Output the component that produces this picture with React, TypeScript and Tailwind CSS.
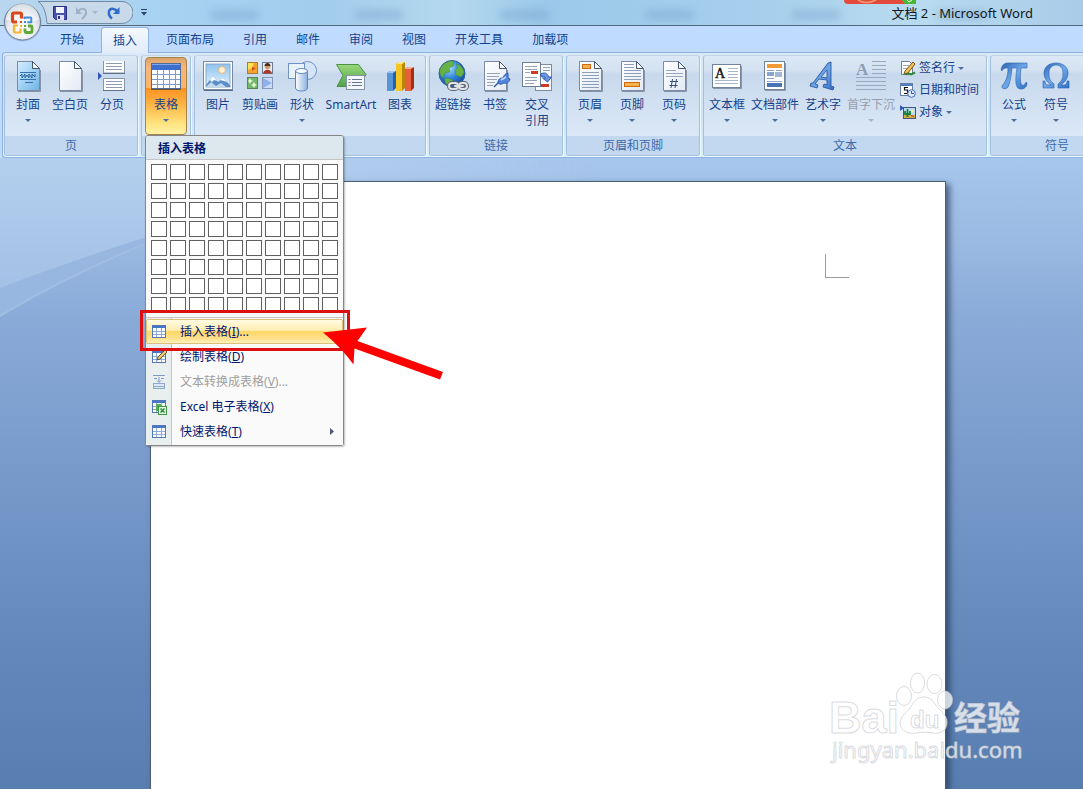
import React, { useState } from 'react';

const FONT = "font-['Noto_Sans','Noto_Sans_CJK_SC',sans-serif]";

const TABS = ['开始', '插入', '页面布局', '引用', '邮件', '审阅', '视图', '开发工具', '加载项'];

/* ---------- icons ---------- */

function Svg({ children, size = 32 }: { children: React.ReactNode; size?: number }) {
  return (
    <svg width={size} height={size} viewBox={`0 0 ${size} ${size}`} className="block shrink-0" aria-hidden="true">
      {children}
    </svg>
  );
}

function Gradients() {
  return (
    <svg width="0" height="0" className="absolute" aria-hidden="true">
      <defs>
        <linearGradient id="gBlue" x1="0" y1="0" x2="1" y2="1">
          <stop offset="0" stopColor="#d6efff" />
          <stop offset="1" stopColor="#6fb4e8" />
        </linearGradient>
        <linearGradient id="gPage" x1="0" y1="0" x2="1" y2="1">
          <stop offset="0" stopColor="#ffffff" />
          <stop offset="1" stopColor="#e3eaf5" />
        </linearGradient>
        <linearGradient id="gLetter" x1="0" y1="0" x2="1" y2="1">
          <stop offset="0" stopColor="#2c62b4" />
          <stop offset="0.5" stopColor="#6fa8e8" />
          <stop offset="1" stopColor="#2f6fc4" />
        </linearGradient>
        <linearGradient id="gGreen" x1="0" y1="0" x2="0" y2="1">
          <stop offset="0" stopColor="#9bd67c" />
          <stop offset="1" stopColor="#4fa548" />
        </linearGradient>
        <linearGradient id="gCyl" x1="0" y1="0" x2="1" y2="0">
          <stop offset="0" stopColor="#ffffff" />
          <stop offset="1" stopColor="#8bb0e0" />
        </linearGradient>
        <radialGradient id="gGlobe" cx="0.4" cy="0.3" r="0.75">
          <stop offset="0" stopColor="#a6dcff" />
          <stop offset="0.5" stopColor="#2f86dc" />
          <stop offset="1" stopColor="#123f97" />
        </radialGradient>
        <linearGradient id="gSky" x1="0" y1="0" x2="0" y2="1">
          <stop offset="0" stopColor="#8cc3f0" />
          <stop offset="1" stopColor="#e2f3fd" />
        </linearGradient>
      </defs>
    </svg>
  );
}

function Sheet({ fill = 'url(#gPage)' }: { fill?: string }) {
  return (
    <>
      <path d="M6 31.500h22.500V10" fill="none" stroke="#8794a8" strokeWidth="1" />
      <path d="M5.500 1.500h15l7 7v22h-22z" fill={fill} stroke="#7b8ba5" />
      <path d="M20.500 1.500v7h7z" fill="#f7fafd" stroke="#46566e" />
    </>
  );
}

const Cover = () => (
  <Svg>
    <Sheet fill="url(#gBlue)" />
    <path d="M8 12.500h16" stroke="#3572ab" />
    <path d="M8 16l2-2v4l3-4v4l2-3 2 3v-4l3 4v-4l3 3v-3" fill="none" stroke="#276099" />
    <path d="M8 19.500h16M13 22.500h8" stroke="#3572ab" />
  </Svg>
);
const Blank = () => <Svg><Sheet /></Svg>;
const Break = () => (
  <Svg>
    <path d="M7.500 1v12h21V1M7.500 30.500V18.500h21v12z" fill="#fff" stroke="#8795aa" />
    <path d="M7 13.500h22M7 30.500h22" stroke="#60718c" />
    <path d="M10 3.500h16M10 6.500h16M10 9.500h16M10 21.500h16M10 24.500h16M10 27.500h16" stroke="#8b9bb6" />
    <path d="M2 12l4 4-4 4z" fill="#2f58b4" />
  </Svg>
);
const TableIcon = () => (
  <Svg>
    <rect x="1.500" y="3.500" width="29" height="25" fill="#fff" stroke="#4d6c9c" />
    <rect x="2" y="4" width="28" height="6" fill="#3c6fcd" />
    <path d="M2 4.500h28" stroke="#7fa7ea" />
    <path d="M2 14.500h28M2 19.500h28M2 24.500h28M7.500 10v18M13.500 10v18M19.500 10v18M25.500 10v18" stroke="#7d9cc9" />
    <path d="M1 29.500h30" stroke="#705227" />
  </Svg>
);
const Picture = () => (
  <Svg>
    <rect x="1.500" y="1.500" width="29" height="28" fill="#fff" stroke="#7688a2" />
    <rect x="4" y="4" width="24" height="23" fill="url(#gSky)" stroke="#8ca6c4" />
    <circle cx="20" cy="10" r="3.500" fill="#fff3cf" stroke="#e6b27a" />
    <path d="M4 25l7-9 5 6 5-4 7 7v2H4z" fill="#5c8fc9" />
    <path d="M8 20l3-4 4 5-3-1-2 2zM18 20l3-2 4 4-3-1z" fill="#fff" />
    <path d="M4 27l5-5 5 4 5-3 5 4z" fill="#dcecf9" opacity=".8" />
    <path d="M2 30.500h29" stroke="#5c6f8a" />
  </Svg>
);
const Clip = () => (
  <Svg>
    <rect x="3.500" y="2.500" width="10" height="11" fill="#f2a52b" stroke="#a8793a" />
    <path d="M4 3h6l-2 5-4 2z" fill="#ffe24d" /><path d="M8 7l4 1-4 3z" fill="#d84d20" />
    <rect x="18.500" y="2.500" width="10" height="11" fill="#e7edf6" stroke="#6d7b90" />
    <circle cx="23.500" cy="6.500" r="2.800" fill="#d79a62" /><path d="M20.500 6c0-4 6-4 6 0z" fill="#4b2b1c" />
    <path d="M19 13.500c1-5 8-5 9 0z" fill="#ad3729" />
    <rect x="3.500" y="17.500" width="10" height="11" fill="#73b86d" stroke="#5a8458" />
    <path d="M6 18l1 2 2 1-2 1-1 2-1-2-1-1 1-1zM10 22l1 2 2 1-2 1-1 2-1-2-2-1 2-1z" fill="#e6f9d6" />
    <rect x="18.500" y="17.500" width="10" height="11" fill="#cbdcfa" stroke="#8498bd" />
    <path d="M19 18l9 5-9 5z" fill="#8fb0ea" />
  </Svg>
);
const Shapes = () => (
  <Svg>
    <circle cx="21.500" cy="10.500" r="9" fill="#d5e5f8" stroke="#6f93c4" />
    <rect x="2.500" y="3.500" width="16" height="15" fill="#e9f1fb" stroke="#6f93c4" />
    <path d="M9.500 11v17c0 4 12 4 12 0V11z" fill="url(#gCyl)" stroke="#5f85ba" />
    <ellipse cx="15.500" cy="11" rx="6" ry="2.500" fill="#f5faff" stroke="#5f85ba" />
  </Svg>
);
const SmartArt = () => (
  <Svg>
    <path d="M1.500 4.500h22l7.500 10-7 12h-22l6-11z" fill="url(#gGreen)" stroke="#4c9148" />
    <rect x="11.500" y="15.500" width="18" height="14" fill="#f4f7fb" stroke="#8492a6" />
    <path d="M17 19.500h10M17 22.500h10M17 25.500h10M13.500 19.500h2M13.500 22.500h2M13.500 25.500h2" stroke="#66768e" />
  </Svg>
);
const Chart = () => (
  <Svg>
    <path d="M3 13l3-2h6v17l-3 3H3z" fill="#2563a9" /><path d="M3 13h6v18H3z" fill="#5795d6" /><path d="M3 13l3-2h6l-3 2z" fill="#9bc7ee" />
    <path d="M12 4l3-2h6v26l-3 3h-6z" fill="#ba8608" /><path d="M12 4h6v27h-6z" fill="#f5c623" /><path d="M12 4l3-2h6l-3 2z" fill="#ffe982" />
    <path d="M21 9l3-2h6v21l-3 3h-6z" fill="#a52c13" /><path d="M21 9h6v22h-6z" fill="#e8603b" /><path d="M21 9l3-2h6l-3 2z" fill="#ffad8a" />
  </Svg>
);
const Globe = () => (
  <Svg>
    <circle cx="15" cy="13.500" r="13" fill="url(#gGlobe)" stroke="#2b5a9d" />
    <path d="M3 9c3-7 10-8 14-8l-1 5-4 2 1 4-5 1-2 5c-3-3-4-6-3-9zM19 4c5 1 8 5 8 9l-3 4-5-2-1-5 3-2zM8 18l6 1 3 3-4 4c-4-1-6-4-5-8z" fill="#65b247" stroke="#3e8934" strokeWidth=".5" />
    <g fill="none" strokeLinecap="round">
      <g stroke="#5c646e" strokeWidth="4"><rect x="12" y="23" width="9" height="6" rx="3" /><rect x="22" y="23" width="8" height="6" rx="3" /><path d="M18 26h8" /></g>
      <g stroke="#dfe4e8" strokeWidth="2"><rect x="12" y="23" width="9" height="6" rx="3" /><rect x="22" y="23" width="8" height="6" rx="3" /><path d="M18 26h8" /></g>
    </g>
  </Svg>
);
const Bookmark = () => (
  <Svg>
    <Sheet />
    <path d="M8 13.500h13M8 16.500h12M8 19.500h10M8 22.500h8M8 25.500h6" stroke="#95a2b7" />
    <path d="M15 27l5-5" stroke="#2d5aae" strokeWidth="1.500" />
    <path d="M19 23c0-4 2-5 5-5 1-3 3-5 5-5v5l2 1c-1 4-4 5-6 4-2 1-4 2-6 0z" fill="#5285db" stroke="#2d5aae" />
    <path d="M22 20l5-3" stroke="#c1dcff" strokeWidth="1.500" />
  </Svg>
);
const CrossRef = () => (
  <Svg>
    <rect x="14.500" y="4.500" width="16" height="26" fill="#f8fafd" stroke="#7d8ca2" />
    <rect x="1.500" y="2.500" width="18" height="24" fill="#fff" stroke="#6f7f98" />
    <path d="M4 6.500h12M4 9.500h12M4 12.500h5M4 17.500h12M4 20.500h12M4 23.500h9M22 7.500h7M22 10.500h7" stroke="#94a2b8" />
    <rect x="10" y="11" width="7" height="3" fill="#cf3a22" /><rect x="20" y="24" width="8" height="3" fill="#cf3a22" />
    <path d="M19.500 14c4-2 7-1 8 3h3l-4 5-5-4h3c-1-2-2-2-4-1z" fill="#6b98e4" stroke="#2d5bad" />
  </Svg>
);
const HeaderIcon = () => (
  <Svg><Sheet /><rect x="8.500" y="4.500" width="8" height="4" fill="#f7b14b" stroke="#cc6b15" />
    <path d="M8 12.500h17M8 15.500h17M8 18.500h17M8 21.500h17M8 24.500h17M8 27.500h17" stroke="#8ca0bd" /></Svg>
);
const FooterIcon = () => (
  <Svg><Sheet /><path d="M8 4.500h10M8 7.500h10M8 10.500h17M8 13.500h17M8 16.500h17M8 19.500h17" stroke="#8ca0bd" />
    <rect x="8.500" y="22.500" width="15" height="4" fill="#f7b14b" stroke="#cc6b15" /></Svg>
);
const PageNo = () => (
  <Svg><Sheet /><path d="M8 10.500h10M8 13.500h17M8 16.500h17" stroke="#9aa8be" />
    <path d="M14.500 19l-1.500 9M18.500 19l-1.500 9M12 21.500h8M11.500 25.500h8" stroke="#35507d" /></Svg>
);
const TextBox = () => (
  <Svg>
    <rect x="1.500" y="4.500" width="28" height="23" fill="#fff" stroke="#72839c" /><path d="M2 28.500h28.500V6" fill="none" stroke="#8b98ab" />
    <text x="4" y="18" fontSize="14" fontFamily="Liberation Serif" fill="#111" stroke="#111" strokeWidth=".4">A</text>
    <path d="M17 8.500h10M17 11.500h10M17 14.500h10M17 17.500h10M4 20.500h23M4 23.500h23" stroke="#a6b6cc" />
  </Svg>
);
const Parts = () => (
  <Svg>
    <rect x="5.500" y="1.500" width="20" height="28" fill="#fff" stroke="#72839c" />
    <rect x="8" y="4" width="15" height="4" fill="#f29a35" />
    <path d="M8 10.500h7M17 10.500h6M8 18.500h7M8 21.500h15" stroke="#8fa5c4" />
    <rect x="8" y="12" width="7" height="4" fill="#87a4cc" /><rect x="16" y="12" width="7" height="5" fill="#a4b8d4" />
    <rect x="8" y="23" width="15" height="4" fill="#4772b6" /><path d="M6 30.500h20.500V3" fill="none" stroke="#8b98ab" />
  </Svg>
);
const WordArt = () => (
  <Svg>
    <path d="M24 2v24l3 1-1 3-10-3 1-3 3 1 0-5-8-1-4 5 3 1-1 3-7-2 1-3 2 0L21 3zM20 10l-6 7 6 1z" fill="url(#gLetter)" stroke="#214d94" strokeWidth=".8" />
  </Svg>
);
const DropCap = () => (
  <Svg>
    <text x="1" y="15" fontSize="17" fontWeight="bold" fontFamily="Liberation Serif" fill="#8e9db3">A</text>
    <path d="M17 1.500h14M17 5.500h14M17 9.500h14M17 13.500h14M1 17.500h30M1 21.500h30M1 25.500h30M1 29.500h30" stroke="#98a8c0" />
  </Svg>
);
const Pi = () => (
  <Svg>
    <path d="M3 10c1-5 3-7 7-7h19v5h-6c-1 8-1 15 1 17 2 1 3-1 4-3l1 1c0 4-3 6-6 6-6 0-6-8-4-21h-5c-1 9-2 15-4 19-2 3-7 2-6-1 3-4 6-8 6-18-3 0-5 0-6 3z" fill="url(#gLetter)" stroke="#2a61af" strokeWidth=".6" />
  </Svg>
);
const Omega = () => (
  <Svg>
    <path d="M3 21h2c0 3 1 4 3 4h3c-4-3-7-7-7-12C4 7 9 3 16 3s12 4 12 10c0 5-3 9-7 12h3c2 0 3-1 3-4h2v7H18v-4c4-3 5-6 5-11s-3-8-7-8-7 3-7 8 1 8 5 11v4H3z" fill="url(#gLetter)" stroke="#2a61af" strokeWidth=".6" />
  </Svg>
);

const Signature = () => (
  <Svg size={16}>
    <path d="M1.500 1.500h8l3 3v10h-11z" fill="#fff" stroke="#6f7e94" /><path d="M3 5.500h6M3 8.500h5" stroke="#9cabc0" />
    <path d="M5 11l8-9 2 2-7 9-4 1z" fill="#f3c352" stroke="#76541b" /><path d="M6 14.500l3-1 2 1 4-2" stroke="#2e8a3c" strokeWidth="2" fill="none" />
  </Svg>
);
const DateIcon = () => (
  <Svg size={16}>
    <rect x=".5" y="1.500" width="12" height="12" fill="#fff" stroke="#65809f" /><path d="M1 3h11" stroke="#507fc4" strokeWidth="2" />
    <path d="M8 5.500H4.500v2.500h3v3.500H4" fill="none" stroke="#111" strokeWidth="1.200" />
    <circle cx="11.500" cy="11.500" r="3.800" fill="#dceafa" stroke="#4573b8" /><path d="M11.500 9v2.500H14" fill="none" stroke="#31589b" />
  </Svg>
);
const ObjectIcon = () => (
  <Svg size={16}>
    <rect x="3.500" y="3.500" width="12" height="11" fill="#b9d9f4" stroke="#3e5878" /><path d="M0 1l4 3-4 3z" fill="#2f58b4" />
    <path d="M4 11h11v3H4z" fill="#d8a746" /><path d="M7.500 5v8M5 7v3h5V7" stroke="#168038" strokeWidth="1.800" fill="none" /><circle cx="12.500" cy="7" r="1.500" fill="#f5ee9c" /><path d="M11 11.500l3 1" stroke="#c04323" />
  </Svg>
);

const MiniGrid = () => (
  <>
    <rect x="1.500" y="1.500" width="13" height="12" fill="#fff" stroke="#5277b3" />
    <path d="M2 3h12" stroke="#4477ca" strokeWidth="2" />
    <path d="M2 7.500h12M2 10.500h12M5.500 4v9M10.500 4v9" stroke="#8cabd9" />
  </>
);
const MiniTable = () => <Svg size={16}><MiniGrid /></Svg>;
const DrawTable = () => (
  <Svg size={16}><MiniGrid /><path d="M6 11l1-3 7-7 2 2-7 7z" fill="#f0ca62" stroke="#3f3a30" strokeWidth=".8" /></Svg>
);
const Convert = () => (
  <Svg size={16}>
    <path d="M2 1.500h12M3 4.500h3M10 4.500h3M8 3v5M6 6.500L8 8.500l2-2" fill="none" stroke="#7f9cc4" />
    <rect x="2.500" y="9.500" width="11" height="5" fill="#dde8f5" stroke="#8fa9cd" /><path d="M3 12.500h10" stroke="#8fa9cd" />
  </Svg>
);
const ExcelTable = () => (
  <Svg size={16}>
    <MiniGrid /><rect x="7.500" y="7.500" width="8" height="8" fill="#e6f4e4" stroke="#3f9542" />
    <path d="M9.500 9.500l4 4M13.500 9.500l-4 4" stroke="#238b35" strokeWidth="1.500" /><path d="M5 5h5v2H7v5H5z" fill="#55b053" />
  </Svg>
);

function Caret({ muted = false }: { muted?: boolean }) {
  return (
    <svg width="6" height="3" viewBox="0 0 6 3" className="block" aria-hidden="true">
      <path d="M0 0h6L3 3z" fill={muted ? '#a9b4c2' : '#4f6f9c'} />
    </svg>
  );
}

/* ---------- ribbon ---------- */

type ToolProps = {
  icon: React.ReactNode;
  label: string;
  second?: string;
  menu?: boolean;
  wide?: string;
  disabled?: boolean;
  active?: boolean;
  onClick?: () => void;
};

function Tool({ icon, label, second, menu, wide = 'w-[42px]', disabled, active, onClick }: ToolProps) {
  return (
    <button
      type="button"
      disabled={disabled}
      onClick={onClick}
      className={`flex h-[78px] shrink-0 flex-col items-center rounded-sm pt-0.5 ${wide} ${
        active
          ? 'border border-[#a8834a] bg-[linear-gradient(#d9a26b_0%,#f5b77a_12%,#fab468_39%,#fb9224_40%,#fcb242_60%,#ffe27c_85%,#fff3a5_100%)]'
          : 'border border-transparent'
      } ${disabled ? 'text-[#959fae]' : 'text-[#15428b]'}`}
    >
      {icon}
      <span className="mt-1 block h-4 text-xs leading-[17px] whitespace-nowrap">{label}</span>
      {second && <span className="block h-4 text-xs leading-[17px]">{second}</span>}
      {menu && (
        <span className="flex h-4 items-center">
          <Caret muted={disabled} />
        </span>
      )}
    </button>
  );
}

function SmallTool({ icon, label, menu }: { icon: React.ReactNode; label: string; menu?: boolean }) {
  return (
    <button type="button" className="flex h-[22px] items-center gap-[3px] text-xs whitespace-nowrap text-[#15428b]">
      {icon}
      <span>{label}</span>
      {menu && <Caret />}
    </button>
  );
}

function Group({ title, width, covered, children }: { title: string; width: string; covered?: boolean; children: React.ReactNode }) {
  return (
    <section
      aria-label={title}
      className={`flex shrink-0 flex-col rounded-[3px] border border-[#a3c0de] border-t-[#c2d6ea] bg-[linear-gradient(#dce8f5_0%,#d3e1f1_15%,#c8d9ed_18%,#dbe8f7_80%)] shadow-[1px_1px_0_#eefaff] ${width}`}
    >
      <div className="flex h-20 px-0.5 pt-px">{children}</div>
      <h2 className="h-[19px] rounded-b-[2px] bg-[#c1d8f0] text-center text-xs leading-[19px] text-[#3e6aaa]">{!covered && title}</h2>
    </section>
  );
}

/* ---------- insert table menu ---------- */

type Entry = { icon: React.ReactNode; text: string; k: string; tail?: string; hot?: boolean; off?: boolean; sub?: boolean };

const ENTRIES: Entry[] = [
  { icon: <MiniTable />, text: '插入表格', k: 'I', tail: '...', hot: true },
  { icon: <DrawTable />, text: '绘制表格', k: 'D' },
  { icon: <Convert />, text: '文本转换成表格', k: 'V', tail: '...', off: true },
  { icon: <ExcelTable />, text: 'Excel 电子表格', k: 'X' },
  { icon: <MiniTable />, text: '快速表格', k: 'T', sub: true },
];

function TableMenu() {
  return (
    <div className="absolute top-[78px] left-0 z-20 w-[199px] rounded-[3px] border border-[#868686] bg-[#fafafa] shadow-[1px_1px_2px_rgba(0,0,0,0.25)]">
      <h3 className="h-[24px] rounded-t-[2px] border-b border-[#c5c5c5] bg-[#dde7ee] pl-3 text-xs leading-[25px] font-bold text-[#00156e]">
        插入表格
      </h3>
      <div className="grid grid-cols-[repeat(10,16px)] gap-[3px] px-[5px] pt-1">
        {Array.from({ length: 80 }, (_, i) => (
          <button
            key={i}
            type="button"
            aria-label={`${(i % 10) + 1}x${Math.floor(i / 10) + 1}`}
            className="size-4 border border-[#5f6062] bg-white"
          />
        ))}
      </div>
      <div className="mt-1 border-t border-[#c5c5c5] bg-[linear-gradient(90deg,#e9eeee_25px,#c5c5c5_25px,#c5c5c5_26px,#fafafa_26px)] pt-px pb-px">
        {ENTRIES.map((e) => (
          <button
            key={e.k}
            type="button"
            disabled={e.off}
            className={`flex h-[25px] w-full items-center border pr-2 pl-1 text-left text-xs ${
              e.hot
                ? 'rounded-[2px] border-[#dcc078] bg-[linear-gradient(#fffbe3_0%,#ffeeb2_45%,#ffd767_50%,#ffe394_85%,#fff3c0_100%)]'
                : 'border-transparent'
            } ${e.off ? 'text-[#a0a0a0]' : 'text-[#00156e]'}`}
          >
            {e.icon}
            <span className="ml-[13px] flex-1 whitespace-nowrap">
              {e.text}(<u className="underline-offset-1">{e.k}</u>){e.tail}
            </span>
            {e.sub && (
              <svg width="4" height="7" viewBox="0 0 4 7" aria-hidden="true">
                <path d="M0 0l4 3.500L0 7z" fill="#4a5878" />
              </svg>
            )}
          </button>
        ))}
      </div>
      <div className="pointer-events-none absolute top-[174px] -left-1.5 h-[41px] w-[210px] border-[3px] border-[#dc1010]" />
      <svg
        width="122"
        height="56"
        viewBox="0 0 122 56"
        className="pointer-events-none absolute top-[189px] left-[176px]"
        aria-hidden="true"
      >
        <path d="M1 7.500L45 2.500L35.500 16L121 47L118 54.500L32.500 23.500L31.500 39.500Q18 21 1 7.500z" fill="#fe0000" />
      </svg>
    </div>
  );
}

/* ---------- title bar ---------- */

function OfficeButton() {
  return (
    <button type="button" aria-label="Office" className="absolute top-0.5 left-0.5 z-10">
      <svg width="41" height="41" viewBox="0 0 41 41" className="block">
        <defs>
          <radialGradient id="orb" cx="0.5" cy="0.7" r="0.65">
            <stop offset="0" stopColor="#ffffff" />
            <stop offset="0.6" stopColor="#e8ebf0" />
            <stop offset="1" stopColor="#b1bdcc" />
          </radialGradient>
        </defs>
        <circle cx="20.500" cy="20.500" r="19" fill="#7890ac" opacity=".45" />
        <circle cx="20.500" cy="20" r="18" fill="url(#orb)" stroke="#6f8199" />
        <path d="M4 18a16.500 16.500 0 0133 0q-16 3-33 0z" fill="#fff" opacity=".55" />
        <g fill="none" strokeLinejoin="round">
          <path d="M15 20h-3q-1.500 0-1.500-1.500v-6q0-1.500 1.500-1.500h6q1.500 0 1.500 1.500v4" stroke="#d9471a" strokeWidth="3.200" />
          <path d="M22.500 17v-1.500h6q.8 0 .8.800v4h-4" stroke="#3f8fd8" strokeWidth="2" />
          <path d="M16 23.500h-4v6q0 1 1 1h5.500v-4" stroke="#f5b52e" strokeWidth="2.200" />
          <path d="M26 24h3q1 0 1 1v4.500q0 1-1 1h-5q-1 0-1-1v-3" stroke="#61ab34" strokeWidth="2.800" />
        </g>
        <path d="M18 19h2v2h-2z" fill="#d9471a" /><path d="M22 19h2v2h-2z" fill="#3f8fd8" />
        <path d="M18 23h2v2h-2z" fill="#f5b52e" /><path d="M22 23h2v2h-2z" fill="#61ab34" />
      </svg>
    </button>
  );
}

function TitleBar() {
  return (
    <header className="relative flex h-[26px] shrink-0 items-center overflow-visible border-b border-[#53677d] bg-[linear-gradient(90deg,#b9d6ee_0%,#a7d2f2_15%,#a3cdec_30%,#b4d8ee_42%,#9bc9ea_50%,#a6cfec_70%,#b9dbf0_85%,#a9cbe8_100%)]">
      <div className="pointer-events-none absolute inset-x-0 bottom-0.5 flex h-3 justify-evenly pl-28 opacity-40 blur-[4px]">
        {['a', 'b', 'c', 'd', 'e', 'f'].map((k) => (
          <span key={k} className="h-2 w-12 bg-[#668fbd]" />
        ))}
      </div>
      <OfficeButton />
      <div className="relative ml-9 flex h-[23px] w-[97px] items-center">
        <svg width="97" height="23" viewBox="0 0 97 23" className="absolute inset-0" aria-hidden="true">
          <path d="M2 .5h84a11 11 0 010 22H11C10 12 8 4 2 .5z" fill="#c8d9ea" stroke="#7289a4" />
        </svg>
        <div className="relative flex items-center pl-4">
          <button type="button" aria-label="保存">
            <svg width="16" height="16" viewBox="0 0 16 16" className="block">
              <path d="M1.500 1.500h13v13h-11l-2-2z" fill="#4a52ae" stroke="#2b2f83" />
              <rect x="4" y="2" width="8" height="6" fill="#f3f6fc" /><rect x="5" y="10" width="7" height="5" fill="#dfe3f0" /><rect x="6" y="11" width="2" height="3" fill="#2b2f83" />
            </svg>
          </button>
          <button type="button" aria-label="撤消" disabled className="ml-1.5">
            <svg width="16" height="16" viewBox="0 0 16 16" className="block">
              <path d="M4 6c3-3 7-3 8 0 1 3-1 5-4 8" fill="none" stroke="#9fb0c8" strokeWidth="2" /><path d="M2 2v7h6z" fill="#9fb0c8" />
            </svg>
          </button>
          <span className="ml-0.5"><Caret muted /></span>
          <button type="button" aria-label="恢复" className="ml-2">
            <svg width="16" height="16" viewBox="0 0 16 16" className="block">
              <path d="M11 6C8 3 4 3 3 6.500 2.500 9 4 12 6 13.500" fill="none" stroke="#2f6cca" strokeWidth="2.500" /><path d="M13.500 2v7H7z" fill="#2f6cca" />
            </svg>
          </button>
        </div>
      </div>
      <button type="button" aria-label="自定义快速访问工具栏" className="relative ml-2">
        <svg width="6" height="7" viewBox="0 0 6 7" className="block"><path d="M0 .5h6" stroke="#294566" /><path d="M0 3h6L3 6.500z" fill="#294566" /></svg>
      </button>
      <div className="relative flex-1" />
      <h1 className="relative mr-[50px] text-[13px] leading-7 text-[#101820]">文档 2 - Microsoft Word</h1>
      <svg width="72" height="5" viewBox="0 0 72 5" className="absolute top-0 right-[167px]" aria-hidden="true">
        <path d="M0 0h64v4H4Q0 4 0 0z" fill="#e34a3c" /><path d="M14 0q8 5 18 0" fill="none" stroke="#f39a75" strokeWidth="1.500" />
        <path d="M58 0h14v4H62q-3-1-4-4z" fill="#45b934" /><path d="M63 0l2 2 3-2" fill="none" stroke="#fff" />
      </svg>
    </header>
  );
}

/* ---------- watermark ---------- */

function Watermark() {
  const paint = { fill: '#ffffff', fillOpacity: 0.75, stroke: '#c9ccd2', strokeOpacity: 0.7, strokeWidth: 1 };
  return (
    <svg width="230" height="120" viewBox="0 0 230 120" className="pointer-events-none absolute right-[43px] bottom-[9px]" aria-hidden="true">
      <g {...paint}>
        <text x="19" y="73" fontSize="45" fontWeight="bold" fontFamily="Liberation Sans, sans-serif">Bai</text>
        <ellipse cx="94" cy="36" rx="7.500" ry="9.500" />
        <ellipse cx="107.500" cy="23" rx="7" ry="10" />
        <ellipse cx="124.500" cy="24" rx="7.500" ry="9.500" />
        <ellipse cx="135" cy="40" rx="7.500" ry="9" />
        <path d="M114 37c8 0 10 6 14 11 5 5 10 9 9 16-1 8-8 10-14 9-6-1-11-1-17 0-8 1-15-2-16-9 0-8 6-11 10-16 4-6 6-11 14-11z" />
        <text x="100" y="68" fontSize="24" fontWeight="bold" fontFamily="Liberation Sans, sans-serif">du</text>
        <text x="144" y="70" fontSize="33" fontWeight="bold" fontFamily="Noto Sans CJK SC, sans-serif">经验</text>
        <text x="22" y="98" fontSize="22" fontFamily="Noto Sans, sans-serif">jingyan.baidu.com</text>
      </g>
    </svg>
  );
}

/* ---------- application ---------- */

export default function App() {
  const [tab, setTab] = useState('插入');
  const [open, setOpen] = useState(true);

  return (
    <div className={`relative flex h-screen flex-col overflow-hidden bg-[#bfdbff] ${FONT}`}>
      <Gradients />
      <TitleBar />

      <nav className="flex h-[26px] shrink-0 items-end gap-px bg-[#bfdbff] pl-[46px]">
        {TABS.map((t) => (
          <button
            key={t}
            type="button"
            onClick={() => setTab(t)}
            className={
              t === tab
                ? 'relative z-20 mx-0.5 -mb-px h-[26px] rounded-t-[3px] border border-b-0 border-[#8db2e3] bg-[linear-gradient(#f4f9ff,#e0ecf8)] px-[11px] text-xs whitespace-nowrap text-[#15428b]'
                : 'h-[25px] px-3.5 text-xs whitespace-nowrap text-[#15428b]'
            }
          >
            {t}
          </button>
        ))}
      </nav>

      <div className="relative z-10 ml-0.5 flex shrink-0 gap-[3px] rounded-l-[3px] border border-r-0 border-[#8db2e3] bg-[linear-gradient(#dbe8f6,#d0e2f4_60%,#d5f2fb)] pt-0.5 pb-px pl-px">
        <Group title="页" width="w-[134px]">
          <Tool icon={<Cover />} label="封面" menu />
          <Tool icon={<Blank />} label="空白页" />
          <Tool icon={<Break />} label="分页" />
        </Group>
        <Group title="表格" width="w-[50px]" covered={open}>
          <div className="relative ml-px">
            <Tool icon={<TableIcon />} label="表格" menu active onClick={() => setOpen(!open)} />
            {open && <TableMenu />}
          </div>
        </Group>
        <Group title="插图" width="w-[232px]" covered={open}>
          <Tool icon={<Picture />} label="图片" />
          <Tool icon={<Clip />} label="剪贴画" />
          <Tool icon={<Shapes />} label="形状" menu />
          <Tool icon={<SmartArt />} label="SmartArt" wide="w-[56px]" />
          <Tool icon={<Chart />} label="图表" />
        </Group>
        <Group title="链接" width="w-[134px]">
          <Tool icon={<Globe />} label="超链接" />
          <Tool icon={<Bookmark />} label="书签" />
          <Tool icon={<CrossRef />} label="交叉" second="引用" />
        </Group>
        <Group title="页眉和页脚" width="w-[134px]">
          <Tool icon={<HeaderIcon />} label="页眉" menu />
          <Tool icon={<FooterIcon />} label="页脚" menu />
          <Tool icon={<PageNo />} label="页码" menu />
        </Group>
        <Group title="文本" width="w-[284px]">
          <Tool icon={<TextBox />} label="文本框" menu />
          <Tool icon={<Parts />} label="文档部件" menu wide="w-[54px]" />
          <Tool icon={<WordArt />} label="艺术字" menu />
          <Tool icon={<DropCap />} label="首字下沉" menu wide="w-[54px]" disabled />
          <div className="flex flex-col pl-0.5">
            <SmallTool icon={<Signature />} label="签名行" menu />
            <SmallTool icon={<DateIcon />} label="日期和时间" />
            <SmallTool icon={<ObjectIcon />} label="对象" menu />
          </div>
        </Group>
        <Group title="符号" width="w-[134px]">
          <Tool icon={<Pi />} label="公式" menu />
          <Tool icon={<Omega />} label="符号" menu />
        </Group>
      </div>

      <main className="relative flex min-h-0 flex-1 bg-[linear-gradient(#a7c6ed_0%,#9cbbe4_12%,#8aabd8_25%,#7b9dcd_45%,#6c90c2_65%,#6386b9_80%,#587eb0_100%)] pt-[23px] pr-[137px] pl-[150px]">
        <svg width="600" height="180" viewBox="0 0 600 180" className="absolute top-0 left-0" aria-hidden="true">
          <defs>
            <linearGradient id="sheen" x1="0" y1="0" x2="0" y2="1">
              <stop offset="0" stopColor="#b4d0ee" />
              <stop offset="1" stopColor="#a3c0e6" />
            </linearGradient>
            <linearGradient id="fade" x1="0" y1="0" x2="1" y2="0">
              <stop offset="0.4" stopColor="#fff" />
              <stop offset="1" stopColor="#000" />
            </linearGradient>
            <mask id="fadeMask"><rect width="600" height="180" fill="url(#fade)" /></mask>
          </defs>
          <g mask="url(#fadeMask)">
            <path d="M0 0h600v60Q260 40 150 84 70 116 0 158z" fill="#98b7e0" />
            <path d="M0 0h600v50Q260 36 150 78 70 103 0 130z" fill="url(#sheen)" />
            <path d="M0 158Q70 116 150 84" fill="none" stroke="#a0bde4" strokeWidth="2" />
          </g>
        </svg>
        <article
          aria-label="文档"
          className="relative flex-1 border border-b-0 border-[#4d5d73] bg-white shadow-[4px_3px_6px_rgba(30,50,80,0.65)]"
        >
          <div className="absolute top-[72px] right-[96px] size-6 border-b border-l border-[#9c9c9c]" />
        </article>
        <Watermark />
      </main>
    </div>
  );
}
